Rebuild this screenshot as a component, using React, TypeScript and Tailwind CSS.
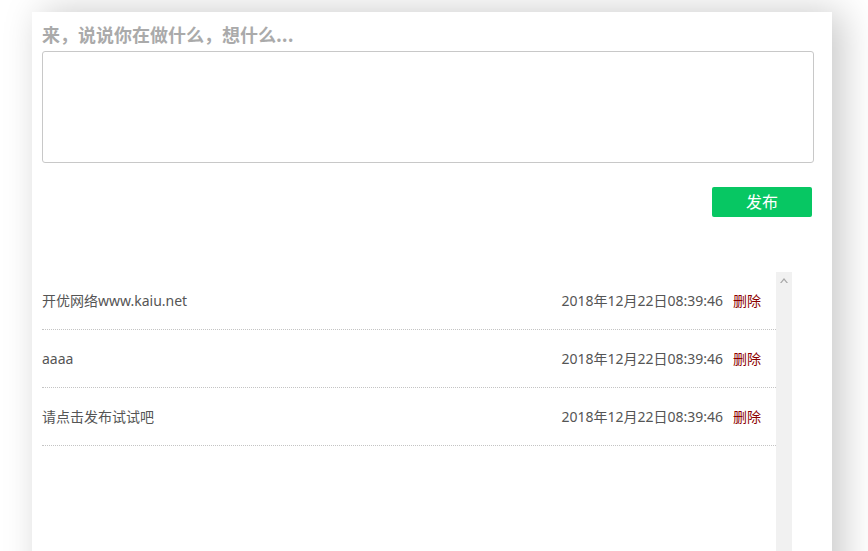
const posts = [
  { id: 1, text: "开优网络www.kaiu.net", time: "2018年12月22日08:39:46" },
  { id: 2, text: "aaaa", time: "2018年12月22日08:39:46" },
  { id: 3, text: "请点击发布试试吧", time: "2018年12月22日08:39:46" },
];

export default function App() {
  return (
    <div
      className="h-[551px] overflow-hidden bg-white pt-[12px] pl-[32px]"
      style={{ fontFamily: '"Noto Sans", "Noto Sans CJK SC", sans-serif' }}
    >
      <div className="h-[620px] w-[800px] bg-white pt-[8px] pl-[10px] shadow-[10px_0_36px_rgba(0,0,0,0.22)]">
        <h2
          className="mb-[2px] text-[18px] leading-[29px] font-bold text-[#aaaaaa]"
          style={{ fontFamily: '"Noto Sans CJK SC", sans-serif' }}
        >
          来，说说你在做什么，想什么...
        </h2>
        <textarea className="block h-[112px] w-[772px] resize-none rounded-[3px] border border-[#c8c8c8] outline-none" />
        <div className="mt-[24px] flex w-[770px] justify-end">
          <button
            type="button"
            className="h-[30px] w-[100px] rounded-[2px] bg-[#07c763] text-[16px] text-white"
          >
            发布
          </button>
        </div>

        <div className="mt-[55px] flex w-[750px]">
          <ul className="w-[734px]">
            {posts.map((post) => (
              <li
                key={post.id}
                className="flex h-[58px] items-center justify-between border-b border-dotted border-[#c4c4c4] pr-[15px] text-[14px] text-[#555555]"
              >
                <span>{post.text}</span>
                <span className="flex items-center gap-[10px]">
                  <span>{post.time}</span>
                  <a className="cursor-pointer text-[#8b0000]">删除</a>
                </span>
              </li>
            ))}
          </ul>
          <div className="flex h-[400px] w-[16px] justify-center bg-[#f1f1f1] pt-[6px]">
            <svg width="8" height="5" viewBox="0 0 8 5">
              <path d="M0 5 L4 0 L8 5 L6.5 5 L4 2 L1.5 5 Z" fill="#a8a8a8" />
            </svg>
          </div>
        </div>
      </div>
    </div>
  );
}
